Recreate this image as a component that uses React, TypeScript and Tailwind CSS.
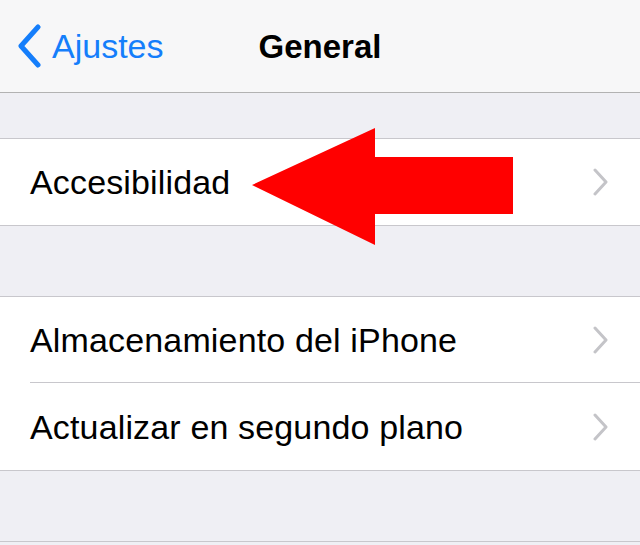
import React from "react";

const rowText = "text-[34px] leading-none text-black tracking-[0.15px]";

function Chevron() {
  return (
    <svg width="16" height="28" viewBox="0 0 16 28" className="shrink-0">
      <path d="M2 2 L13 14 L2 26" fill="none" stroke="#c4c4c8" strokeWidth="3" strokeLinecap="round" strokeLinejoin="round" />
    </svg>
  );
}

function Row({ label, last }: { label: string; last?: boolean }) {
  return (
    <div className="bg-white pl-[30px]">
      <div className={`flex items-center h-[86px] pr-[31px] ${last ? "" : "border-b border-[#c8c7cc]"}`}>
        <span className={`${rowText} flex-1`}>{label}</span>
        <Chevron />
      </div>
    </div>
  );
}

export default function App() {
  return (
    <div
      className="relative w-[640px] h-[545px] overflow-hidden bg-[#efeff4]"
      style={{ fontFamily: '"Liberation Sans", Arial, sans-serif' }}
    >
      {/* nav bar */}
      <div className="grid grid-cols-[1fr_auto_1fr] items-center h-[93px] bg-[#f7f7f8] border-b border-[#b2b2b2]">
        <div className="flex items-center gap-[10px] pl-[16px]">
          <svg width="26" height="44" viewBox="0 0 26 44">
            <path d="M22 3 L5 22 L22 41" fill="none" stroke="#157efb" strokeWidth="5" strokeLinecap="round" strokeLinejoin="round" />
          </svg>
          <span className="text-[34px] leading-none text-[#157efb]">Ajustes</span>
        </div>
        <span className="text-[33px] font-bold leading-none text-black">General</span>
        <div />
      </div>

      <div className="h-[45px]" />
      <div className="border-y border-[#c8c7cc]">
        <Row label="Accesibilidad" last />
      </div>

      <div className="h-[70px]" />
      <div className="border-y border-[#c8c7cc]">
        <Row label="Almacenamiento del iPhone" />
        <div className="bg-white pl-[30px]">
          <div className="flex items-center h-[87px] pr-[31px]">
            <span className={`${rowText} flex-1`}>Actualizar en segundo plano</span>
            <Chevron />
          </div>
        </div>
      </div>

      <div className="h-[71px] border-b border-[#c8c7cc]" />

      {/* red arrow annotation */}
      <svg className="absolute left-0 top-0 pointer-events-none" width="640" height="545" viewBox="0 0 640 545">
        <polygon points="252,185 375,128 375,157 513,157 513,214 375,214 375,245" fill="#ff0000" />
      </svg>
    </div>
  );
}
